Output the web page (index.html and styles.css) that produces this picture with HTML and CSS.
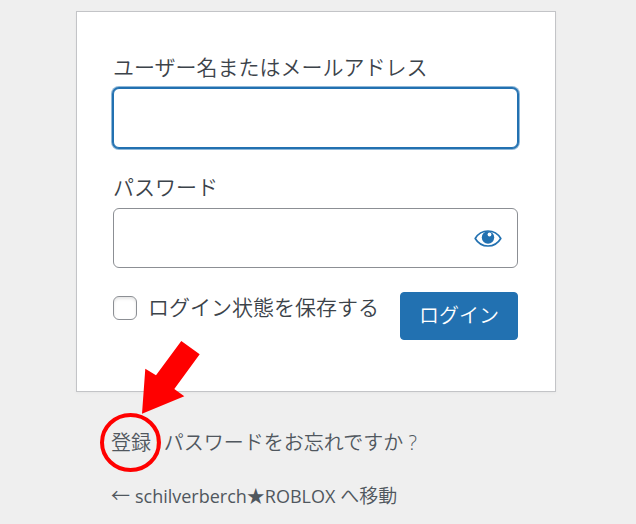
FILE: index.html
```
<!DOCTYPE html>
<html lang="ja">
<head>
  <meta charset="UTF-8" />
  <meta name="viewport" content="width=device-width, initial-scale=1.0"/>
  <title>ログイン</title>
  <link rel="stylesheet" href="styles.css">
</head>
<body>
  <main class="login">
    <form class="login-form">
      <div class="field">
        <label for="user">ユーザー名またはメールアドレス</label>
        <input class="text-input active" type="text" id="user" autocomplete="username">
      </div>

      <div class="field">
        <label for="pass">パスワード</label>
        <div class="password-wrapper">
          <input class="text-input" type="password" id="pass" autocomplete="current-password">
          <button class="toggle-password" type="button" aria-label="パスワードを表示">
            <svg width="28" height="18" viewBox="0 0 28 18" aria-hidden="true">
              <path d="M1.2 9.500C4 4.800 8.400 2 14 2S24 4.800 26.800 9.500C24 14.200 19.600 17 14 17S4 14.200 1.200 9.500Z" fill="none" stroke="currentColor" stroke-width="1.700" stroke-linejoin="round"/>
              <circle cx="14" cy="8.500" r="6.200" fill="currentColor"/>
              <circle cx="15.500" cy="5.500" r="1.900" fill="#fff"/>
            </svg>
          </button>
        </div>
      </div>

      <div class="form-footer">
        <label class="remember"><input type="checkbox">ログイン状態を保存する</label>
        <button class="submit" type="submit">ログイン</button>
      </div>
    </form>

    <nav class="links">
      <p>
        <span class="register">
          <a href="#">登録</a>
          <!-- Arrow and ring around the register link -->
          <svg class="marker" width="102" height="134" viewBox="0 0 102 134" aria-hidden="true">
            <polygon points="81.300,1 99.700,14.300 74.300,49 84.300,56.300 42,73.700 45.300,28.700 56,35.300" fill="#f00"/>
            <ellipse cx="30.500" cy="102.500" rx="28.500" ry="27.500" fill="none" stroke="#f00" stroke-width="4"/>
          </svg>
        </span>
        <span class="separator">|</span>
        <a href="#">パスワードをお忘れですか ?</a>
      </p>
      <p class="back"><a href="#">← <span class="site-name">schilverberch★ROBLOX</span> へ移動</a></p>
    </nav>
  </main>
</body>
</html>
```
FILE: styles.css
```
:root {
  --blue: #2271b1;
  --text: #3c434a;
  --link: #50575e;
  --border: #8c8f94;
  --font-stack: "Open Sans", "Noto Sans CJK JP", sans-serif;
}

* {
  box-sizing: border-box;
}

body {
  margin: 0;
  padding: 11px 4px 12px 0;
  background-color: #efefef;
  color: var(--text);
  font-family: var(--font-stack);
  font-weight: 350;
}

.login {
  max-width: 480px;
  margin: 0 auto;
}

.login-form {
  display: flex;
  flex-direction: column;
  gap: 24px;
  padding: 40px 37px 51px 36px;
  background-color: #fff;
  border: 1px solid #c3c4c7;
  box-shadow: 0 1px 3px rgba(0, 0, 0, 0.04);
}

.field {
  display: flex;
  flex-direction: column;
  gap: 6px;
}

label {
  font-size: 21px;
  line-height: 30px;
}

.text-input {
  display: block;
  width: 100%;
  height: 60px;
  padding: 0 12px;
  border: 1px solid var(--border);
  border-radius: 6px;
  background-color: #fff;
  color: var(--text);
  font: inherit;
  font-size: 24px;
  outline: none;
}

.text-input.active,
.text-input:focus {
  border-color: var(--blue);
  box-shadow: 0 0 0 1px var(--blue), 0 0 0 2px rgba(34, 113, 177, 0.5);
}

.password-wrapper {
  position: relative;
}

.password-wrapper .text-input {
  padding-right: 60px;
}

.toggle-password {
  position: absolute;
  top: 0;
  right: 0;
  display: flex;
  justify-content: center;
  align-items: center;
  width: 60px;
  height: 60px;
  padding: 0;
  border: 0;
  background: none;
  color: var(--blue);
  cursor: pointer;
}

.form-footer {
  display: flex;
  justify-content: space-between;
  align-items: flex-start;
}

.remember {
  display: flex;
  align-items: flex-start;
  gap: 11px;
}

.remember input {
  appearance: none;
  width: 24px;
  height: 24px;
  margin: 4px 0 0;
  border: 1px solid var(--border);
  border-radius: 6px;
  background-color: #fff;
  box-shadow: inset 0 2px 3px rgba(0, 0, 0, 0.1);
}

.remember input:checked {
  background-color: var(--blue);
}

.submit {
  height: 48px;
  padding: 0 18px 3px;
  border: 1px solid var(--blue);
  border-radius: 4px;
  background-color: var(--blue);
  color: #fff;
  font: inherit;
  font-size: 20px;
  cursor: pointer;
}

.links {
  display: flex;
  flex-direction: column;
  gap: 23px;
  padding: 36px 35px 0;
  color: var(--link);
  font-size: 20px;
  line-height: 30px;
}

.links p {
  display: flex;
  gap: 1px;
  margin: 0;
}

.links a {
  color: inherit;
  text-decoration: none;
}

.links a:hover {
  color: var(--blue);
}

.links .back {
  font-size: 19px;
}

.site-name {
  font-size: 18px;
  font-weight: 400;
}

.register {
  position: relative;
}

.marker {
  position: absolute;
  top: -88px;
  left: -11px;
  pointer-events: none;
}
```
